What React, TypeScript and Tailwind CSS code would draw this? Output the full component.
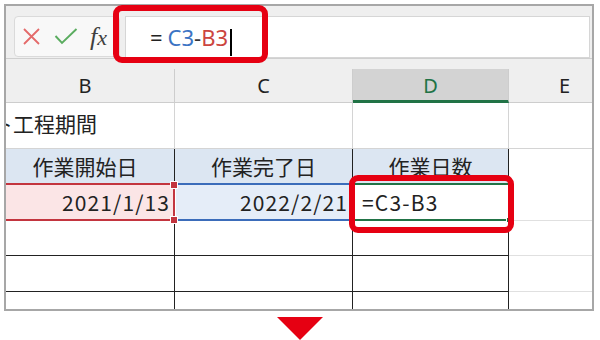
import React from "react";

const jp = { fontFamily: '"Noto Sans CJK JP", "Noto Sans", sans-serif' };
const latin = { fontFamily: '"Noto Sans", "Noto Sans CJK JP", sans-serif' };

function FormulaBar() {
  return (
    <div className="h-[54px] bg-[#efefef] border-b border-[#cfcfcf] pt-[10px] pl-[8px] pr-[2px] flex items-start gap-[5px]">
      <div className="w-[106px] h-[41px] rounded-[4px] border border-[#dadada] bg-[#f8f8f8] flex items-center pl-[7px]">
        <svg width="19" height="19" viewBox="0 0 19 19">
          <path d="M2 2 L17 17 M17 2 L2 17" stroke="#e46a6a" strokeWidth="1.8" fill="none" />
        </svg>
        <svg width="24" height="19" viewBox="0 0 24 19" className="ml-[13px]">
          <path d="M1.5 9 L8 16 L22.5 2" stroke="#5aac5f" strokeWidth="1.9" fill="none" />
        </svg>
        <span
          className="ml-[12px] italic text-[#3f3f3f] leading-none"
          style={{ fontFamily: '"Liberation Serif", serif' }}
        >
          <span className="text-[26px]">f</span>
          <span className="text-[22px]">x</span>
        </span>
      </div>
      <div className="flex-1 h-[42px] border border-[#d6d6d6] bg-white flex items-center pl-[24px]" style={latin}>
        <span className="text-[22px] leading-none text-[#222]">=</span>
        <span className="text-[22px] leading-none text-[#3b74c4] ml-[5px]">C3</span>
        <span className="text-[22px] leading-none text-[#333]">-</span>
        <span className="text-[22px] leading-none text-[#cc4540]">B3</span>
        <span className="inline-block w-[1.5px] h-[27px] bg-black ml-[2px] mt-[10px]" />
      </div>
    </div>
  );
}

function HeaderRow() {
  return (
    <div className="h-[34px] flex bg-[#efefef] text-[20px] text-[#222]" style={latin}>
      <div className="w-[169px] border-r border-b border-[#cdcdcd] flex items-center justify-center pr-[10px]">B</div>
      <div className="w-[178px] border-r border-b border-[#cdcdcd] flex items-center justify-center">C</div>
      <div className="w-[156px] border-r border-[#cdcdcd] border-b-[3px] border-b-[#217346] bg-[#d3d3d3] flex items-center justify-center text-[#217346] pt-[2px]">
        D
      </div>
      <div className="flex-1 border-b border-[#cdcdcd] flex items-center justify-center pl-[28px]">E</div>
    </div>
  );
}

export default function App() {
  const line = "border-[#222]";
  return (
    <div className="w-[600px] h-[340px] bg-white overflow-hidden relative" style={jp}>
      <div className="ml-[4px] mt-[4px] w-[590px] h-[307px] border-2 border-[#a7a7a7] flex flex-col overflow-hidden bg-white">
        <FormulaBar />
        <div className="h-[10px] bg-[#efefef] shrink-0" />
        <HeaderRow />

        {/* row 1 */}
        <div className="h-[46px] flex text-[21px] text-[#222] shrink-0">
          <div className={`w-[169px] border-r border-[#d4d4d4] border-b ${line} overflow-hidden flex items-center whitespace-nowrap`}>
            <span className="ml-[-119px] leading-none mt-[-4px]">プロジェクト工程期間</span>
          </div>
          <div className={`w-[178px] border-r border-[#d4d4d4] border-b ${line}`} />
          <div className={`w-[156px] border-r border-[#d4d4d4] border-b ${line}`} />
          <div className="flex-1 border-b border-[#d4d4d4]" />
        </div>

        {/* row 2 table header */}
        <div className="h-[34px] flex text-[21px] text-[#222] shrink-0">
          <div className={`w-[169px] border-r ${line} bg-[#dce6f2] flex items-center justify-center pr-[10px] leading-none`}>
            作業開始日
          </div>
          <div className={`w-[178px] border-r ${line} bg-[#dce6f2] flex items-center justify-center leading-none`}>
            作業完了日
          </div>
          <div className={`w-[156px] border-r ${line} bg-[#dce6f2] flex items-center justify-center leading-none`}>
            作業日数
          </div>
          <div className="flex-1" />
        </div>

        {/* row 3 */}
        <div className="h-[38px] flex text-[21px] text-[#222] shrink-0">
          <div className="w-[169px] relative border-y-2 border-r-2 border-[#c3353f] bg-[#fbe5e6] flex items-center justify-end pr-[3px] leading-none tracking-[1.1px]">
            2021/1/13
            <div className="absolute right-[-5px] top-[-4px] w-[8px] h-[8px] bg-[#c3353f] border border-white" />
            <div className="absolute right-[-5px] bottom-[-5px] w-[8px] h-[8px] bg-[#c3353f] border border-white" />
          </div>
          <div className="w-[178px] border-y-2 border-[#3b6cba] bg-[#e5edf8] flex items-center justify-end pr-[6px] leading-none ml-[1px] tracking-[1.1px]">
            2022/2/21
          </div>
          <div className="w-[156px] relative border-y-2 border-r-2 border-[#217346] bg-white flex items-center pl-[8px] leading-none tracking-[1.2px]">
            =C3-B3
            <div className="absolute right-[-4px] bottom-[-4px] w-[6px] h-[6px] bg-[#217346] border border-white" />
          </div>
          <div className="flex-1 border-b border-[#e0e0e0]" />
        </div>

        {/* rows 4-6 */}
        {[35, 36, 20].map((h, i) => (
          <div key={i} className="flex shrink-0" style={{ height: h }}>
            <div className={`w-[169px] border-r border-b ${line}`} />
            <div className={`w-[178px] border-r border-b ${line}`} />
            <div className={`w-[156px] border-r border-b ${line}`} />
            <div className="flex-1 border-b border-[#e0e0e0]" />
          </div>
        ))}
      </div>

      <div className="w-[600px] flex justify-center mt-[6px]">
        <svg width="46" height="23" viewBox="0 0 46 23">
          <polygon points="0,0 46,0 23,23" fill="#e60012" />
        </svg>
      </div>

      {/* annotation boxes */}
      <div className="absolute left-[113px] top-[5px] w-[155px] h-[58px] border-[6px] border-[#e60012] rounded-[9px]" />
      <div className="absolute left-[349px] top-[175px] w-[165px] h-[58px] border-[6px] border-[#e60012] rounded-[9px]" />
    </div>
  );
}
